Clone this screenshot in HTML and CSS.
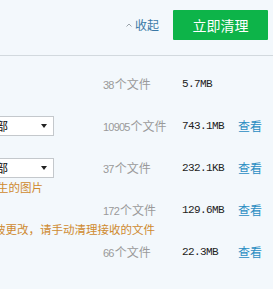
FILE: index.html
```html
<!DOCTYPE html>
<html lang="zh-CN">
<head>
<meta charset="UTF-8">
<meta name="viewport" content="width=device-width, initial-scale=1.0">
<title>清理</title>
<link rel="stylesheet" href="styles.css">
</head>
<body>
<div class="header">
<a class="collapse" href="#"><svg class="caret" width="6" height="4" viewBox="0 0 6 4"><polyline points="0.5,3.5 3,1 5.5,3.5" fill="none" stroke="#9aa3aa" stroke-width="1"/></svg>收起</a>
<button class="clean-btn">立即清理</button>
</div>
<div class="list">
<div class="row">
<div class="left"></div>
<div class="count"><span class="num">38</span>个文件</div>
<div class="size">5.7MB</div>
</div>
<div class="row">
<div class="left"><div class="select">全部<span class="arrow"></span></div></div>
<div class="count"><span class="num">10905</span>个文件</div>
<div class="size">743.1MB</div>
<a class="view" href="#">查看</a>
</div>
<div class="row">
<div class="left"><div class="select">全部<span class="arrow"></span></div></div>
<div class="count"><span class="num">37</span>个文件</div>
<div class="size">232.1KB</div>
<a class="view" href="#">查看</a>
<div class="hint hint-short">生的图片</div>
</div>
<div class="row">
<div class="left"></div>
<div class="count"><span class="num">172</span>个文件</div>
<div class="size">129.6MB</div>
<a class="view" href="#">查看</a>
<div class="hint hint-long">被更改，请手动清理接收的文件</div>
</div>
<div class="row">
<div class="left"></div>
<div class="count"><span class="num">66</span>个文件</div>
<div class="size">22.3MB</div>
<a class="view" href="#">查看</a>
</div>
</div>
</body>
</html>
```

FILE: styles.css
```css
body {
    margin: 0;
    padding: 0;
    background-color: #f3f8fc;
    font-family: "Noto Sans CJK SC", "Liberation Sans", sans-serif;
    font-size: 12px;
    color: #333;
    overflow: hidden;
}
.header {
    display: flex;
    justify-content: flex-end;
    align-items: center;
    height: 56px;
    box-sizing: border-box;
    padding: 10px 5px 16px 0;
    border-bottom: 1px solid #d2d9de;
}
.collapse {
    display: flex;
    align-items: center;
    gap: 3px;
    color: #3a78a6;
    text-decoration: none;
    font-size: 12px;
    margin-right: 14px;
}
.clean-btn {
    width: 95px;
    height: 30px;
    padding: 0;
    border: none;
    border-radius: 1px;
    background-color: #0db449;
    color: #fff;
    font-family: "Noto Sans CJK SC", sans-serif;
    font-size: 14px;
    cursor: pointer;
}
.list {
    padding-top: 7px;
}
.row {
    display: grid;
    grid-template-columns: 103px 79px 56px auto;
    grid-template-rows: 20px 18px;
    height: 42px;
    box-sizing: border-box;
    padding-top: 11px;
    line-height: 20px;
}
.left {
    display: flex;
    align-items: center;
}
.select {
    position: relative;
    box-sizing: border-box;
    width: 94px;
    height: 20px;
    margin-left: -40px;
    padding-left: 23px;
    background-color: #fff;
    border: 1px solid #c4c8cc;
    color: #111;
    line-height: 18px;
}
.arrow {
    position: absolute;
    right: 6px;
    top: 7px;
    width: 0;
    height: 0;
    border-left: 3.5px solid transparent;
    border-right: 3.5px solid transparent;
    border-top: 4px solid #222;
}
.count {
    color: #9a9a9a;
}
.num {
    font-family: "Liberation Sans", sans-serif;
    font-size: 11px;
    letter-spacing: -0.8px;
    margin-right: 1px;
}
.size {
    font-family: "Liberation Mono", monospace;
    font-size: 11px;
    letter-spacing: -0.6px;
    color: #222;
}
.view {
    color: #2a8dc2;
    text-decoration: none;
}
.hint {
    grid-row: 2;
    grid-column: 1 / span 4;
    font-size: 11.5px;
    line-height: 18px;
    color: #cf8a2f;
    white-space: nowrap;
}
.hint-short {
    margin-left: -3px;
}
.hint-long {
    margin-left: -6px;
}
```
